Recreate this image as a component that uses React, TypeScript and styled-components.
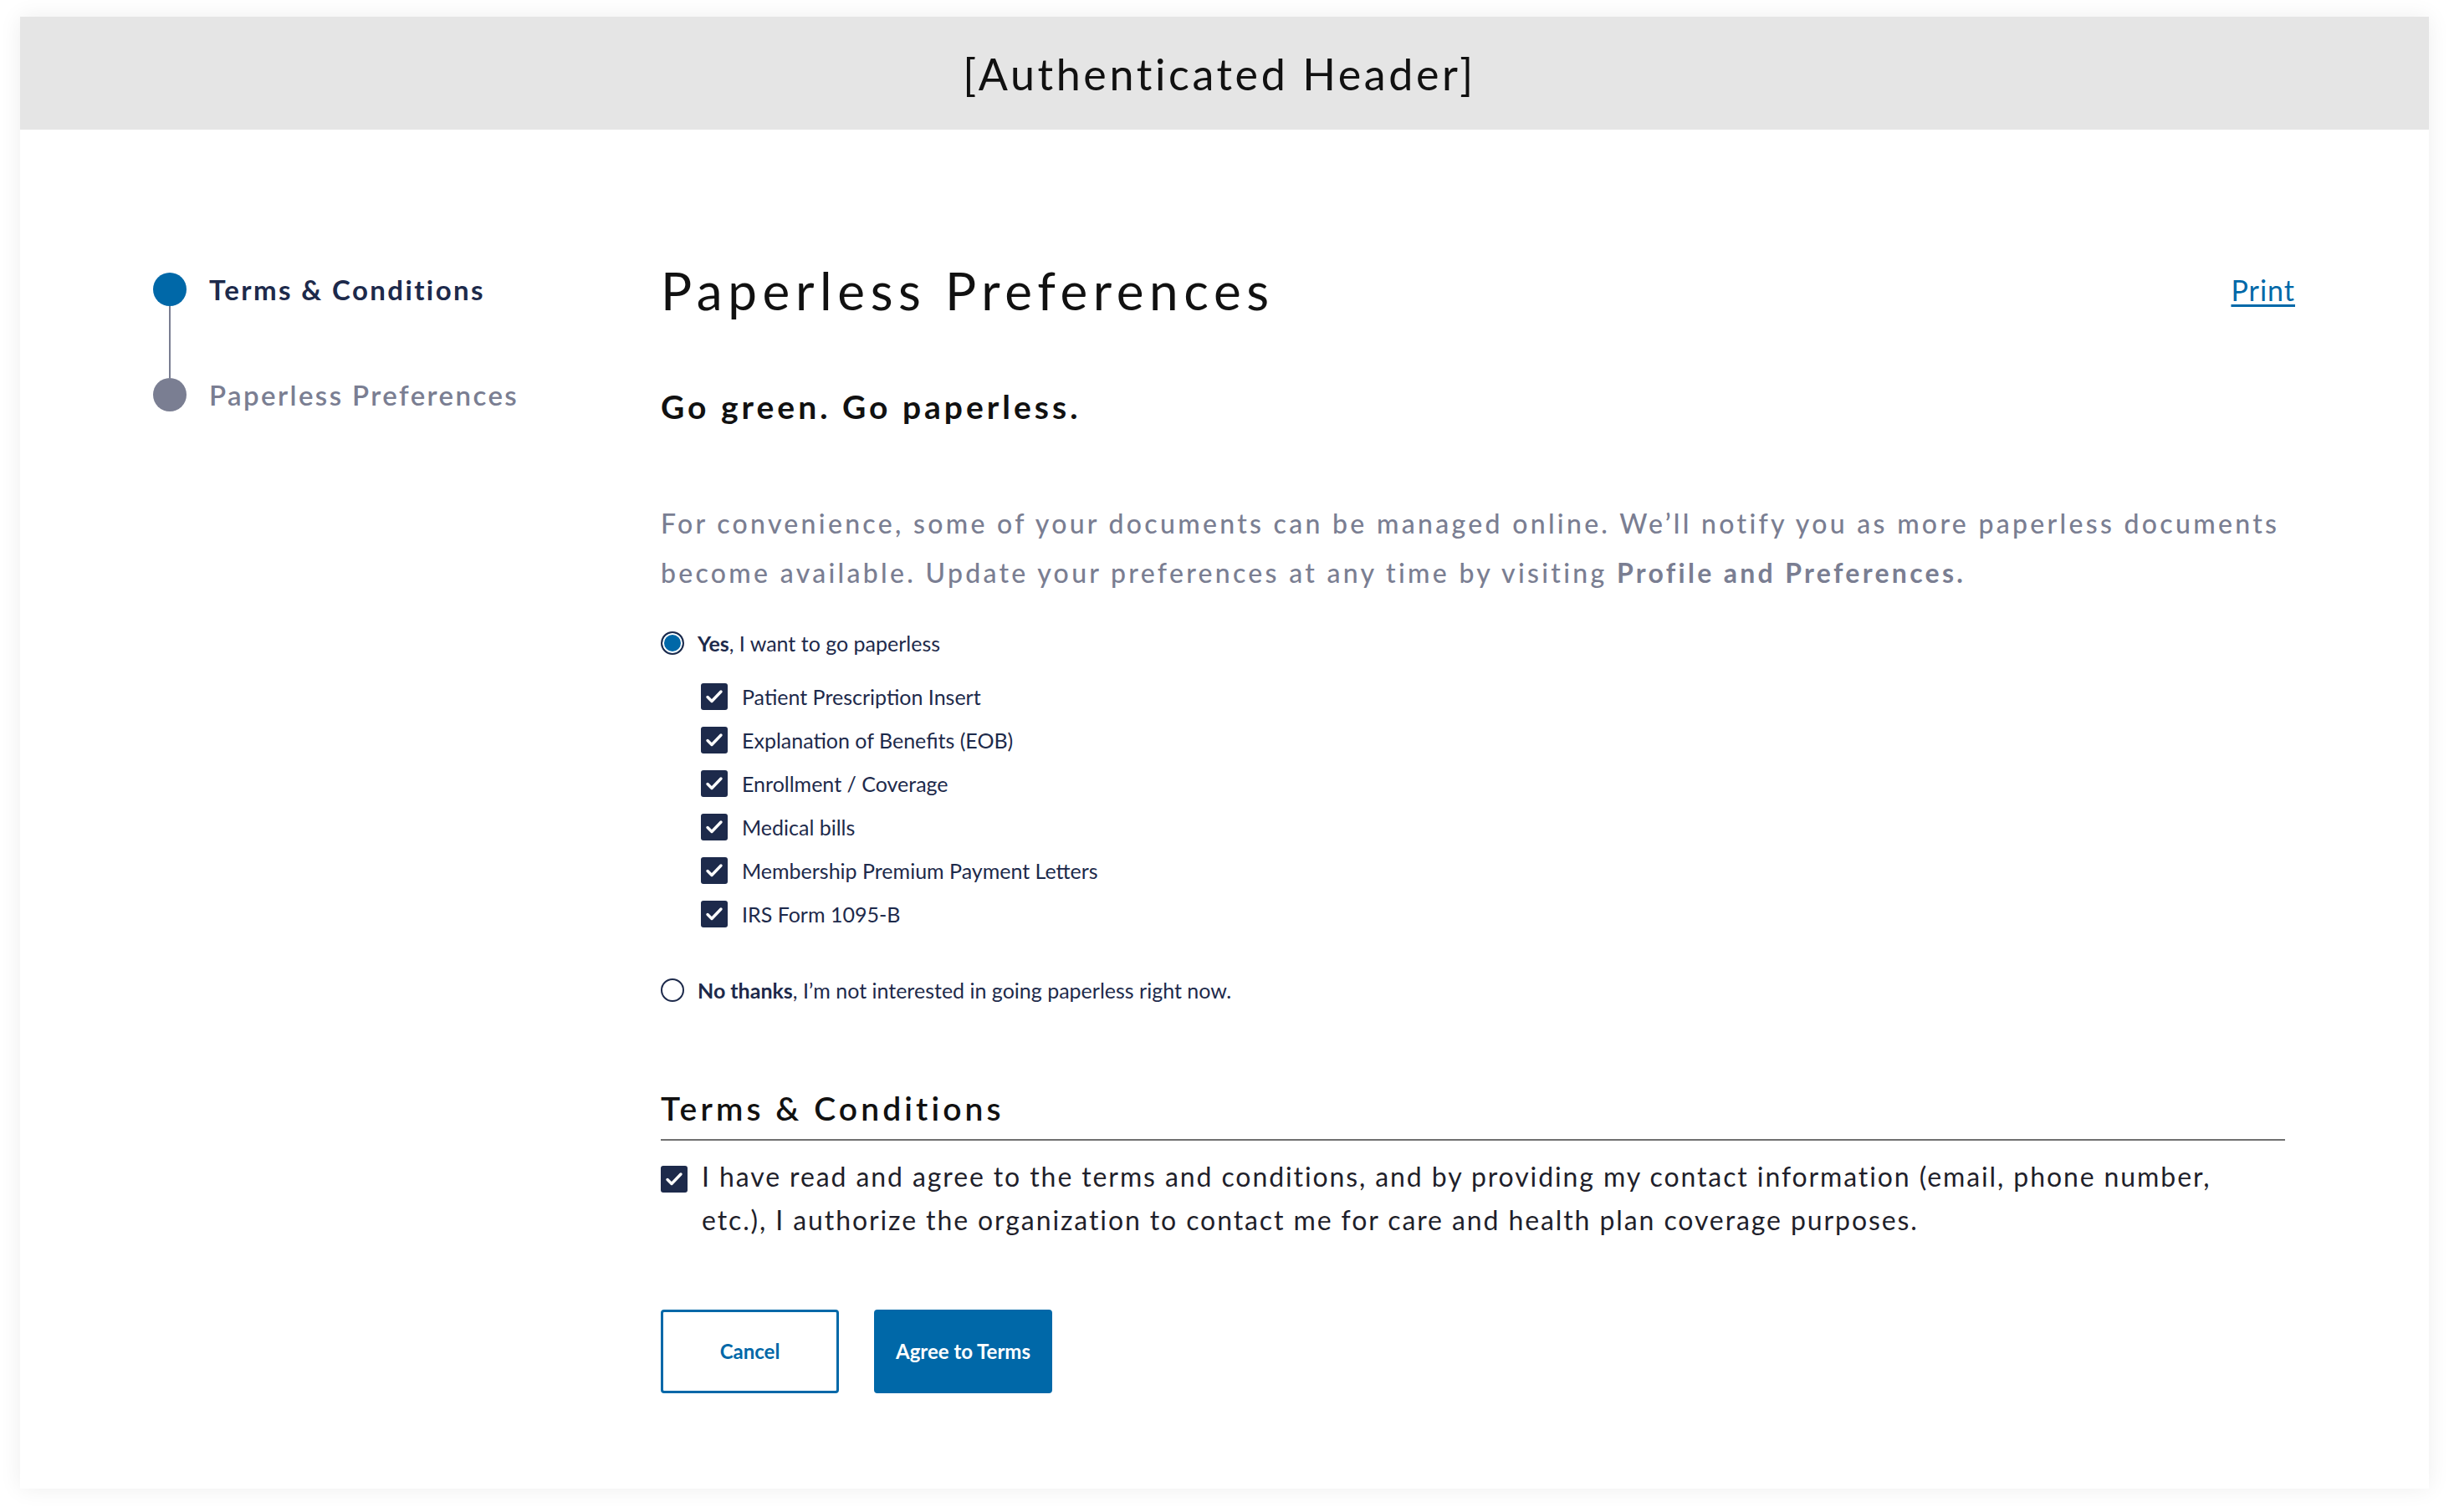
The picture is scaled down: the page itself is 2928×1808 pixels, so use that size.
import { useState } from "react";
import styled, { createGlobalStyle } from "styled-components";

const GlobalStyle = createGlobalStyle`
  * {
    box-sizing: border-box;
  }
  body {
    margin: 0;
    background: #ffffff;
    font-family: "Lato", "Noto Sans", sans-serif;
  }
`;

const Page = styled.div`
  padding: 20px 24px 28px;
`;

const Card = styled.div`
  background: #ffffff;
  box-shadow: 0 0 26px rgba(0, 0, 0, 0.07);
  min-height: 1760px;
  display: flex;
  flex-direction: column;
`;

const Header = styled.header`
  height: 135px;
  padding-right: 12px;
  background: #e5e5e5;
  display: flex;
  align-items: center;
  justify-content: center;
  font-size: 52px;
  font-weight: 400;
  letter-spacing: 3.6px;
  color: #111111;
`;

const Body = styled.div`
  display: grid;
  grid-template-columns: 607px 1fr;
  padding: 155px 160px 114px 159px;
`;

const Stepper = styled.nav`
  display: flex;
  flex-direction: column;
  margin-top: 16px;
`;

const Step = styled.div`
  display: flex;
  align-items: center;
  gap: 27px;
`;

const Dot = styled.span<{ $active?: boolean }>`
  width: 40px;
  height: 40px;
  border-radius: 50%;
  flex-shrink: 0;
  background: ${(p) => (p.$active ? "#0068a8" : "#7a7e92")};
`;

const StepLabel = styled.span<{ $active?: boolean }>`
  font-size: 33px;
  letter-spacing: 2.4px;
  font-weight: ${(p) => (p.$active ? 700 : 600)};
  color: ${(p) => (p.$active ? "#1d2a4b" : "#7a7e92")};
`;

const Connector = styled.span`
  width: 2px;
  height: 86px;
  margin-left: 19px;
  background: #7a7e92;
`;

const Main = styled.main`
  display: flex;
  flex-direction: column;
`;

const TitleRow = styled.div`
  display: flex;
  align-items: center;
  justify-content: space-between;
`;

const Title = styled.h1`
  margin: 0;
  font-size: 62px;
  line-height: 1.2;
  font-weight: 400;
  letter-spacing: 6.6px;
  color: #111111;
`;

const PrintLink = styled.a`
  font-size: 34px;
  line-height: 1.2;
  letter-spacing: 1px;
  color: #0068a8;
  text-decoration: underline;
  text-underline-offset: 4px;
  cursor: pointer;
`;

const Tagline = styled.h2`
  margin: 79px 0 0;
  font-size: 39px;
  line-height: 1.2;
  font-weight: 700;
  letter-spacing: 4px;
  color: #111111;
`;

const Intro = styled.p`
  margin: 86px 0 0;
  font-size: 32px;
  line-height: 59px;
  font-weight: 500;
  letter-spacing: 3.3px;
  color: #7a7e92;
  b {
    font-weight: 700;
  }
`;

const Options = styled.div`
  display: flex;
  flex-direction: column;
  margin-top: 39px;
`;

const RadioRow = styled.label<{ $gap?: number }>`
  display: flex;
  align-items: center;
  gap: 16px;
  height: 32px;
  margin-top: ${(p) => p.$gap ?? 0}px;
  font-size: 25px;
  color: #1d2a4b;
  cursor: pointer;
  b {
    font-weight: 700;
  }
`;

const Radio = styled.span<{ $checked?: boolean }>`
  width: 28px;
  height: 28px;
  border-radius: 50%;
  flex-shrink: 0;
  border: 2px solid #1d2a4b;
  background: ${(p) => (p.$checked ? "#0068a8" : "#ffffff")};
  box-shadow: inset 0 0 0 2px #ffffff;
`;

const CheckList = styled.div`
  display: flex;
  flex-direction: column;
  gap: 20px;
  margin: 32px 0 0 48px;
`;

const CheckRow = styled.label`
  display: flex;
  align-items: center;
  gap: 17px;
  height: 32px;
  font-size: 25px;
  color: #1d2a4b;
  cursor: pointer;
`;

const Box = styled.span`
  width: 32px;
  height: 32px;
  flex-shrink: 0;
  border-radius: 3px;
  background: #1d2a4b;
  display: flex;
  align-items: center;
  justify-content: center;
  svg {
    width: 24px;
    height: 24px;
  }
`;

const SectionTitle = styled.h3`
  margin: 102px 12px 0 0;
  padding-bottom: 13px;
  border-bottom: 2px solid #707070;
  font-size: 39px;
  line-height: 1.2;
  font-weight: 600;
  letter-spacing: 4.1px;
  color: #111111;
`;

const AgreeRow = styled.label`
  display: flex;
  align-items: flex-start;
  gap: 17px;
  margin-top: 17px;
  max-width: 1920px;
  cursor: pointer;
`;

const AgreeBox = styled(Box)`
  margin-top: 13px;
`;

const AgreeText = styled.span`
  font-size: 32px;
  line-height: 52px;
  letter-spacing: 1.9px;
  color: #1f1f2b;
`;

const Actions = styled.div`
  display: flex;
  gap: 42px;
  margin-top: 81px;
`;

const Button = styled.button<{ $primary?: boolean }>`
  width: 213px;
  height: 100px;
  border-radius: 4px;
  border: 3px solid #0068a8;
  background: ${(p) => (p.$primary ? "#0068a8" : "#ffffff")};
  color: ${(p) => (p.$primary ? "#ffffff" : "#0068a8")};
  font-family: "Lato", "Noto Sans", sans-serif;
  font-size: 24px;
  font-weight: 700;
  cursor: pointer;
`;

const Check = () => (
  <svg viewBox="0 0 24 24" fill="none">
    <path
      d="M4 12.5l5 5L20 6"
      stroke="#ffffff"
      strokeWidth="3.4"
      strokeLinecap="round"
      strokeLinejoin="round"
    />
  </svg>
);

const documents = [
  "Patient Prescription Insert",
  "Explanation of Benefits (EOB)",
  "Enrollment / Coverage",
  "Medical bills",
  "Membership Premium Payment Letters",
  "IRS Form 1095-B",
];

function App() {
  const [paperless, setPaperless] = useState(true);

  return (
    <Page>
      <GlobalStyle />
      <Card>
        <Header>[Authenticated Header]</Header>
        <Body>
          <Stepper>
            <Step>
              <Dot $active />
              <StepLabel $active>Terms &amp; Conditions</StepLabel>
            </Step>
            <Connector />
            <Step>
              <Dot />
              <StepLabel>Paperless Preferences</StepLabel>
            </Step>
          </Stepper>

          <Main>
            <TitleRow>
              <Title>Paperless Preferences</Title>
              <PrintLink>Print</PrintLink>
            </TitleRow>
            <Tagline>Go green. Go paperless.</Tagline>
            <Intro>
              For convenience, some of your documents can be managed online.
              We’ll notify you as more paperless documents become available.
              Update your preferences at any time by visiting{" "}
              <b>Profile and Preferences.</b>
            </Intro>

            <Options>
              <RadioRow onClick={() => setPaperless(true)}>
                <Radio $checked={paperless} />
                <span>
                  <b>Yes</b>, I want to go paperless
                </span>
              </RadioRow>
              <CheckList>
                {documents.map((doc) => (
                  <CheckRow key={doc}>
                    <Box>
                      <Check />
                    </Box>
                    {doc}
                  </CheckRow>
                ))}
              </CheckList>
              <RadioRow $gap={59} onClick={() => setPaperless(false)}>
                <Radio $checked={!paperless} />
                <span>
                  <b>No thanks</b>, I’m not interested in going paperless right
                  now.
                </span>
              </RadioRow>
            </Options>

            <SectionTitle>Terms &amp; Conditions</SectionTitle>
            <AgreeRow>
              <AgreeBox>
                <Check />
              </AgreeBox>
              <AgreeText>
                I have read and agree to the terms and conditions, and by
                providing my contact information (email, phone number, etc.), I
                authorize the organization to contact me for care and health
                plan coverage purposes.
              </AgreeText>
            </AgreeRow>

            <Actions>
              <Button>Cancel</Button>
              <Button $primary>Agree to Terms</Button>
            </Actions>
          </Main>
        </Body>
      </Card>
    </Page>
  );
}

export default App;
